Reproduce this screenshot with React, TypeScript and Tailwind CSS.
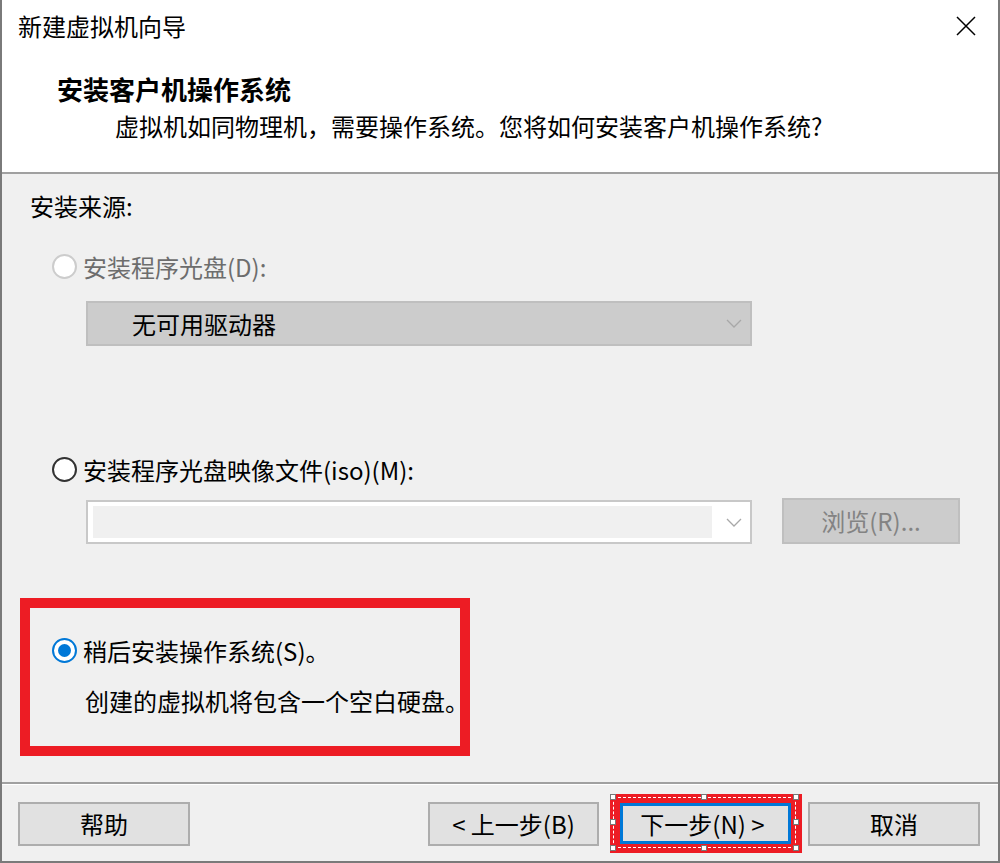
import React from "react";

function Radio({ state }: { state: "disabled" | "off" | "on" }) {
  if (state === "on") {
    return (
      <div className="w-[25px] h-[25px] rounded-full border-2 border-[#0078d7] bg-white flex items-center justify-center shrink-0">
        <div className="w-[13px] h-[13px] rounded-full bg-[#0078d7]" />
      </div>
    );
  }
  if (state === "off") {
    return <div className="w-[25px] h-[25px] rounded-full border-2 border-[#333333] bg-white shrink-0" />;
  }
  return <div className="w-[25px] h-[25px] rounded-full border-2 border-[#cccccc] bg-white shrink-0" />;
}

function Chevron() {
  return (
    <svg width="16" height="9" viewBox="0 0 16 9" className="shrink-0">
      <path d="M1 1L8 8L15 1" fill="none" stroke="#a8a8a8" strokeWidth="1.3" />
    </svg>
  );
}

function Handle({ cls }: { cls: string }) {
  return <div className={`absolute w-[6px] h-[6px] bg-white border border-[#777777] ${cls}`} />;
}

export default function App() {
  return (
    <div className="w-[1000px] h-[863px] flex flex-col border-x-2 border-b-2 border-[#7a7a7a] bg-[#f0f0f0] text-black font-['Noto_Sans_CJK_SC',sans-serif] text-[24px] leading-[24px] overflow-hidden whitespace-nowrap">
      {/* Header */}
      <div className="h-[172px] bg-white flex flex-col pl-[16px] shrink-0">
        <div className="flex items-center justify-between pt-[14px] pr-[22px]">
          <span>新建虚拟机向导</span>
          <svg width="20" height="20" viewBox="0 0 20 20">
            <path d="M1 1L19 19M19 1L1 19" stroke="#000" strokeWidth="1.5" />
          </svg>
        </div>
        <div className="mt-[39px] ml-[39px] font-bold text-[26px] leading-[24px]">安装客户机操作系统</div>
        <div className="mt-[13px] ml-[97px]">虚拟机如同物理机，需要操作系统。您将如何安装客户机操作系统?</div>
      </div>
      <div className="h-[2px] bg-[#a0a0a0] shrink-0" />

      {/* Body */}
      <div className="flex-1 flex flex-col">
        <div className="mt-[20px] ml-[28px]">安装来源:</div>

        <div className="mt-[36px] ml-[50px] flex items-center gap-[6px] text-[#6d6d6d]">
          <Radio state="disabled" />
          <span>安装程序光盘(D):</span>
        </div>

        <div className="mt-[22px] ml-[84px] w-[666px] h-[45px] bg-[#cccccc] border-2 border-[#bfbfbf] flex items-center justify-between pl-[44px] pr-[8px]">
          <span>无可用驱动器</span>
          <Chevron />
        </div>

        <div className="mt-[111px] ml-[50px] flex items-center gap-[6px]">
          <Radio state="off" />
          <span>安装程序光盘映像文件(iso)(M):</span>
        </div>

        <div className="mt-[16px] ml-[84px] flex items-start">
          <div className="mt-[2px] w-[666px] h-[44px] bg-white border-2 border-[#c8c8c8] flex items-center pl-[5px] pr-[8px]">
            <div className="w-[619px] h-[32px] bg-[#f0f0f0]" />
            <div className="flex-1" />
            <Chevron />
          </div>
          <div className="ml-[30px] w-[178px] h-[46px] bg-[#cccccc] border-2 border-[#bfbfbf] flex items-center justify-center text-[#838383]">
            浏览(R)...
          </div>
        </div>

        <div className="mt-[54px] ml-[18px] w-[450px] h-[158px] border-[10px] border-[#ed1c24] flex flex-col pt-[30px] pl-[22px]">
          <div className="flex items-center gap-[6px]">
            <Radio state="on" />
            <span>稍后安装操作系统(S)。</span>
          </div>
          <div className="mt-[26px] ml-[33px] whitespace-nowrap">创建的虚拟机将包含一个空白硬盘。</div>
        </div>
      </div>

      {/* Footer */}
      <div className="h-[2px] bg-[#a0a0a0] shrink-0" />
      <div className="h-[1px] bg-white shrink-0" />
      <div className="h-[76px] shrink-0 flex items-start pt-[17px] pl-[16px] pr-[18px]">
        <div className="w-[172px] h-[44px] bg-[#e1e1e1] border-2 border-[#adadad] flex items-center justify-center">帮助</div>
        <div className="flex-1" />
        <div className="w-[171px] h-[44px] bg-[#e1e1e1] border-2 border-[#adadad] flex items-center justify-center">&lt; 上一步(B)</div>
        <div className="relative ml-[11px] -mt-[8px] w-[192px] h-[59px] bg-[#ed1c24] pl-[10px] pt-[9px]">
          <div className="absolute left-[3px] top-[3px] w-[183px] h-[51px] border border-dashed border-white" />
          <Handle cls="left-[0px] top-[0px]" />
          <Handle cls="left-[91px] top-[0px]" />
          <Handle cls="left-[183px] top-[0px]" />
          <Handle cls="left-[0px] top-[25px]" />
          <Handle cls="left-[183px] top-[25px]" />
          <Handle cls="left-[0px] top-[51px]" />
          <Handle cls="left-[91px] top-[51px]" />
          <Handle cls="left-[183px] top-[51px]" />
          <div className="relative w-[171px] h-[41px] bg-[#e1e1e1] border-[3px] border-[#0078d7] flex items-center justify-center pr-[6px]">
            下一步(N) &gt;
          </div>
        </div>
        <div className="ml-[6px] w-[172px] h-[44px] bg-[#e1e1e1] border-2 border-[#adadad] flex items-center justify-center">取消</div>
      </div>
    </div>
  );
}
